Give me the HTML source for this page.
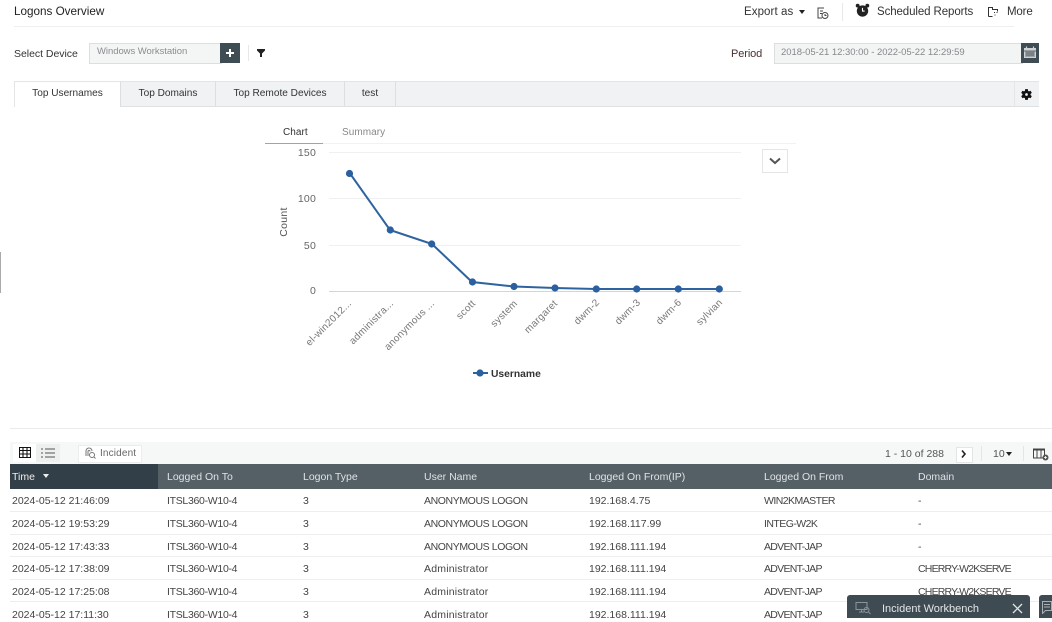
<!DOCTYPE html>
<html><head><meta charset="utf-8">
<style>
html,body{margin:0;padding:0;background:#fff;}
body{width:1052px;height:618px;overflow:hidden;position:relative;font-family:"Liberation Sans",sans-serif;color:#333;}
.a{position:absolute;white-space:nowrap;}
.t{font-size:10.5px;line-height:14px;color:#444;}
.u{letter-spacing:-.4px;}
.i{letter-spacing:-.3px;}
.c{letter-spacing:-.7px;}
.m{letter-spacing:.2px;}
.h{font-size:10.5px;line-height:14px;color:#dfe3e5;letter-spacing:0;}
.l{position:absolute;left:10px;width:1042px;height:1px;background:#eceeef;}
.tab{position:absolute;top:81px;height:25px;line-height:25px;font-size:10.1px;text-align:center;color:#333;border-right:1px solid #dcdedf;box-sizing:border-box;}
</style></head><body>

<div class="a" style="left:14px;top:4px;font-size:11.7px;line-height:16px;color:#222;">Logons Overview</div>
<div class="a" style="left:14px;top:26px;width:1000px;height:1px;background:#eef0f0;"></div>

<div class="a" style="left:744px;top:5px;font-size:11.5px;line-height:15px;letter-spacing:.08px;color:#333;">Export as</div>
<div class="a" style="left:799px;top:10px;width:0;height:0;border:3.5px solid transparent;border-top:4px solid #222;border-bottom:0;"></div>
<svg class="a" style="left:816px;top:6px" width="14" height="14" viewBox="0 0 14 14" fill="none" stroke="#444" stroke-width="1"><path d="M8 2H2v10h4"/><path d="M4 5h3M4 7.500h2"/><circle cx="9" cy="9.500" r="3"/><path d="M9 8v1.500h1.500"/></svg>
<div class="a" style="left:842px;top:3px;width:1px;height:18px;background:#e6e8e8;"></div>
<svg class="a" style="left:855px;top:3px" width="15" height="15" viewBox="0 0 14 14"><circle cx="7" cy="7.500" r="5.300" fill="#222"/><circle cx="2.500" cy="2.500" r="1.800" fill="#222"/><circle cx="11.500" cy="2.500" r="1.800" fill="#222"/><path d="M7 4.500v3h2" stroke="#fff" stroke-width="1" fill="none"/></svg>
<div class="a" style="left:877px;top:5px;font-size:11.5px;line-height:15px;letter-spacing:-.1px;color:#333;">Scheduled Reports</div>
<svg class="a" style="left:987px;top:6px" width="12" height="12" viewBox="0 0 12 12" fill="none" stroke="#333" stroke-width="1"><path d="M1.500 10.500v-9h4v2h5v2"/><path d="M1.500 10.500h4M7 6.500h1M9.500 6.500h1M7.500 9h1"/></svg>
<div class="a" style="left:1007px;top:5px;font-size:11.5px;line-height:15px;letter-spacing:-.15px;color:#333;">More</div>

<div class="a" style="left:14px;top:47px;font-size:10.5px;line-height:14px;color:#333;letter-spacing:-.03px;">Select Device</div>
<div class="a" style="left:89px;top:43px;width:131px;height:19px;background:#f4f5f5;border:1px solid #dcdfe0;box-sizing:content-box;"></div>
<div class="a" style="left:97px;top:45px;font-size:9.5px;line-height:13px;color:#8a8d90;letter-spacing:-.05px;">Windows Workstation</div>
<div class="a" style="left:220px;top:43px;width:20px;height:20px;background:#404c53;"></div>
<div class="a" style="left:226px;top:52px;width:8px;height:2px;background:#fff;"></div>
<div class="a" style="left:229px;top:49px;width:2px;height:8px;background:#fff;"></div>
<div class="a" style="left:248px;top:45px;width:1px;height:16px;background:#e6e8e8;"></div>
<svg class="a" style="left:257px;top:49px" width="8" height="8" viewBox="0 0 8 8"><path d="M0 0h8v1.500L5 4.500V8H3V4.500L0 1.500z" fill="#222"/></svg>

<div class="a" style="left:731px;top:47px;font-size:11px;line-height:14px;color:#4b3030;letter-spacing:-.1px;">Period</div>
<div class="a" style="left:774px;top:43px;width:247px;height:19px;background:#f3f4f4;border:1px solid #dcdfe0;"></div>
<div class="a" style="left:781px;top:46px;font-size:9.5px;line-height:13px;color:#85888b;letter-spacing:-.03px;">2018-05-21 12:30:00 - 2022-05-22 12:29:59</div>
<div class="a" style="left:1021px;top:43px;width:18px;height:20px;background:#404c53;"></div>
<svg class="a" style="left:1023px;top:45px" width="14" height="14" viewBox="0 0 14 14"><path d="M1 3h12v10H1z" fill="#cfd3d5"/><path d="M1 6h12M3 8h8M3 10h8M3 6v6M5 6v6M7 6v6M9 6v6M11 6v6" stroke="#404c53" stroke-width=".7"/><path d="M3.500 1.500v2M10.500 1.500v2" stroke="#cfd3d5" stroke-width="1.200"/></svg>

<div class="a" style="left:14px;top:81px;width:1025px;height:26px;background:#f1f2f3;border-top:1px solid #e3e5e6;border-bottom:1px solid #dfe1e2;box-sizing:border-box;"></div>
<div class="tab" style="left:14px;width:107px;background:#fff;border-left:1px solid #e3e5e6;height:26px;border-top:1px solid #e3e5e6;line-height:24px;">Top Usernames</div>
<div class="tab" style="left:121px;width:95px;line-height:26px;">Top Domains</div>
<div class="tab" style="left:216px;width:129px;line-height:26px;">Top Remote Devices</div>
<div class="tab" style="left:345px;width:51px;line-height:26px;">test</div>
<div class="a" style="left:1014px;top:82px;width:1px;height:24px;background:#e4e6e7;"></div>
<svg class="a" style="left:1020px;top:88px" width="13" height="13" viewBox="0 0 24 24"><path d="M19.400 13a7.500 7.500 0 0 0 0-2l2.400-1.900-2.300-4-2.900 1.200a7.500 7.500 0 0 0-1.700-1L14.500 2h-5l-.4 3.300a7.500 7.500 0 0 0-1.700 1L4.500 5.100l-2.300 4L4.600 11a7.500 7.500 0 0 0 0 2l-2.400 1.900 2.300 4 2.900-1.200a7.500 7.500 0 0 0 1.700 1l.4 3.300h5l.4-3.300a7.500 7.500 0 0 0 1.700-1l2.900 1.200 2.300-4zM12 14.500a2.500 2.500 0 1 1 0-5 2.500 2.500 0 0 1 0 5z" fill="#111"/></svg>

<div class="a" style="left:266px;top:143px;width:530px;height:1px;background:#f1f2f2;"></div>
<div class="a" style="left:265px;top:143px;width:58px;height:1px;background:#8fbc5e;"></div>
<div class="a" style="left:283px;top:126px;font-size:10px;line-height:14px;color:#333;letter-spacing:.05px;">Chart</div>
<div class="a" style="left:342px;top:126px;font-size:10px;line-height:14px;color:#888;letter-spacing:.05px;">Summary</div>

<svg class="a" style="left:0;top:0;overflow:visible" width="1052" height="618">
<g stroke="#eef0f1" stroke-width="1"><path d="M329 152.500h412M329 198.500h412M329 245.500h412"/></g>
<path d="M329 291.500h412" stroke="#ccd6eb" stroke-width="1"/>
<g font-family="Liberation Sans" font-size="10.500" fill="#666" text-anchor="end" letter-spacing=".2">
<text x="316" y="156">150</text><text x="316" y="202">100</text><text x="316" y="249">50</text><text x="316" y="294">0</text></g>
<text transform="translate(287 222) rotate(-90)" text-anchor="middle" font-family="Liberation Sans" font-size="10.500" fill="#555" letter-spacing=".3">Count</text>
<polyline points="350,173.500 390,230 432,244 472,282 514,286.500 555,288 596,289 636,289 678,289 719,289" fill="none" stroke="#2f63a0" stroke-width="2"/>
<g fill="#2b60a0"><circle cx="349.500" cy="173.500" r="3.600"/><circle cx="390.300" cy="230" r="3.600"/><circle cx="431.700" cy="244" r="3.600"/><circle cx="472.500" cy="282" r="3.600"/><circle cx="514" cy="286.500" r="3.600"/><circle cx="555" cy="288" r="3.600"/><circle cx="596.300" cy="289" r="3.600"/><circle cx="636.700" cy="289" r="3.600"/><circle cx="678.300" cy="289" r="3.600"/><circle cx="719.300" cy="289" r="3.600"/></g>
<g font-family="Liberation Sans" font-size="10" fill="#777" text-anchor="end" letter-spacing=".25">
<text transform="translate(352 304) rotate(-45)">el-win2012...</text>
<text transform="translate(394 304) rotate(-45)">administra...</text>
<text transform="translate(435 304) rotate(-45)">anonymous ...</text>
<text transform="translate(476 304) rotate(-45)">scott</text>
<text transform="translate(518 304) rotate(-45)">system</text>
<text transform="translate(558 304) rotate(-45)">margaret</text>
<text transform="translate(600 303) rotate(-45)">dwm-2</text>
<text transform="translate(641 303) rotate(-45)">dwm-3</text>
<text transform="translate(682 303) rotate(-45)">dwm-6</text>
<text transform="translate(723 303) rotate(-45)">sylvian</text>
</g>
<path d="M473 373h15" stroke="#2f63a0" stroke-width="2"/><circle cx="480" cy="373" r="3.600" fill="#2b60a0"/>
<text x="491" y="377" font-family="Liberation Sans" font-size="10.300" font-weight="bold" fill="#333">Username</text>
</svg>

<div class="a" style="left:762px;top:149px;width:24px;height:22px;border:1px solid #e3e5e6;background:#fff;"></div>
<svg class="a" style="left:769px;top:157px" width="12" height="8" viewBox="0 0 12 8"><path d="M1 1.500l5 4.500 5-4.500" fill="none" stroke="#555" stroke-width="2"/></svg>

<div class="a" style="left:10px;top:428px;width:1042px;height:1px;background:#e9ebec;"></div>
<div class="a" style="left:10px;top:442px;width:1042px;height:22px;background:#f6f7f7;"></div>
<div class="a" style="left:13px;top:444px;width:47px;height:18px;background:#eef0f0;"></div>
<div class="a" style="left:13px;top:444px;width:23px;height:18px;background:#fff;"></div>
<svg class="a" style="left:19px;top:447px" width="12" height="11" viewBox="0 0 12 11"><path d="M.5.500h11v10H.500zM.5 3.500h11M.5 7h11M4 .5v10M8 .5v10" fill="none" stroke="#111" stroke-width="1.100"/></svg>
<svg class="a" style="left:41px;top:448px" width="14" height="10" viewBox="0 0 14 10"><path d="M4 1h10M4 5h10M4 9h10M0 1h2M0 5h2M0 9h2" stroke="#555" stroke-width="1"/></svg>
<div class="a" style="left:78px;top:445px;width:62px;height:16px;background:#fff;border:1px solid #eceeee;"></div>
<svg class="a" style="left:84px;top:447px" width="12" height="12" viewBox="0 0 12 12" fill="none" stroke="#777" stroke-width="1"><path d="M2 9V4a3 3 0 0 1 6 0M4 9V4.500a1 1 0 0 1 2 0"/><circle cx="8" cy="8" r="2.500"/><path d="M10 10l1.500 1.500"/></svg>
<div class="a" style="left:100px;top:447px;font-size:10px;line-height:13px;color:#666;letter-spacing:.15px;">Incident</div>

<div class="a" style="left:885px;top:447px;font-size:10.5px;line-height:14px;color:#555;">1 - 10 of 288</div>
<div class="a" style="left:956px;top:447px;width:15px;height:14px;background:#fff;border:1px solid #e4e6e6;"></div>
<svg class="a" style="left:961px;top:450px" width="6" height="8" viewBox="0 0 6 8"><path d="M1 .5l3 3.500-3 3.500" fill="none" stroke="#222" stroke-width="1.600"/></svg>
<div class="a" style="left:981px;top:446px;width:1px;height:15px;background:#e4e6e6;"></div>
<div class="a" style="left:993px;top:447px;font-size:10.500px;line-height:14px;color:#555;">10</div>
<div class="a" style="left:1006px;top:452px;width:0;height:0;border:3.500px solid transparent;border-top:4px solid #222;border-bottom:0;"></div>
<div class="a" style="left:1023px;top:446px;width:1px;height:15px;background:#e4e6e6;"></div>
<svg class="a" style="left:1033px;top:448px" width="16" height="13" viewBox="0 0 16 13"><path d="M.5 1h11v9H.500z" fill="none" stroke="#444"/><path d="M.5 1.500h11" stroke="#444" stroke-width="2"/><path d="M4 2v8M8 2v8" stroke="#444"/><circle cx="12.500" cy="9.500" r="3" fill="#555"/><path d="M11 9.500h3M12.500 8v3" stroke="#fff" stroke-width=".8"/></svg>

<div class="a" style="left:10px;top:464px;width:1042px;height:25px;background:#545f66;"></div>
<div class="a" style="left:10px;top:464px;width:148px;height:25px;background:#333f48;"></div>
<div class="a h" style="left:12px;top:470px;color:#eee;">Time</div>
<div class="a" style="left:43px;top:474px;width:0;height:0;border:3.500px solid transparent;border-top:4px solid #eee;border-bottom:0;"></div>
<div class="a h" style="left:167px;top:470px;">Logged On To</div>
<div class="a h" style="left:303px;top:470px;">Logon Type</div>
<div class="a h" style="left:424px;top:470px;">User Name</div>
<div class="a h" style="left:589px;top:470px;">Logged On From(IP)</div>
<div class="a h" style="left:764px;top:470px;">Logged On From</div>
<div class="a h" style="left:918px;top:470px;">Domain</div>

<div class="l" style="top:511px"></div><div class="l" style="top:534px"></div><div class="l" style="top:556px"></div><div class="l" style="top:579px"></div><div class="l" style="top:601px"></div>

<div class="a t" style="left:12px;top:494px">2024-05-12 21:46:09</div><div class="a t i" style="left:167px;top:494px">ITSL360-W10-4</div><div class="a t" style="left:303px;top:494px">3</div><div class="a t u" style="left:424px;top:494px">ANONYMOUS LOGON</div><div class="a t" style="left:589px;top:494px">192.168.4.75</div><div class="a t c" style="left:764px;top:494px;letter-spacing:-.55px">WIN2KMASTER</div><div class="a t" style="left:918px;top:494px">-</div>
<div class="a t" style="left:12px;top:517px">2024-05-12 19:53:29</div><div class="a t i" style="left:167px;top:517px">ITSL360-W10-4</div><div class="a t" style="left:303px;top:517px">3</div><div class="a t u" style="left:424px;top:517px">ANONYMOUS LOGON</div><div class="a t" style="left:589px;top:517px">192.168.117.99</div><div class="a t c" style="left:764px;top:517px;letter-spacing:-.55px">INTEG-W2K</div><div class="a t" style="left:918px;top:517px">-</div>
<div class="a t" style="left:12px;top:540px">2024-05-12 17:43:33</div><div class="a t i" style="left:167px;top:540px">ITSL360-W10-4</div><div class="a t" style="left:303px;top:540px">3</div><div class="a t u" style="left:424px;top:540px">ANONYMOUS LOGON</div><div class="a t" style="left:589px;top:540px">192.168.111.194</div><div class="a t c" style="left:764px;top:540px">ADVENT-JAP</div><div class="a t" style="left:918px;top:540px">-</div>
<div class="a t" style="left:12px;top:562px">2024-05-12 17:38:09</div><div class="a t i" style="left:167px;top:562px">ITSL360-W10-4</div><div class="a t" style="left:303px;top:562px">3</div><div class="a t m" style="left:424px;top:562px">Administrator</div><div class="a t" style="left:589px;top:562px">192.168.111.194</div><div class="a t c" style="left:764px;top:562px">ADVENT-JAP</div><div class="a t c" style="left:918px;top:562px;letter-spacing:-.8px">CHERRY-W2KSERVE</div>
<div class="a t" style="left:12px;top:585px">2024-05-12 17:25:08</div><div class="a t i" style="left:167px;top:585px">ITSL360-W10-4</div><div class="a t" style="left:303px;top:585px">3</div><div class="a t m" style="left:424px;top:585px">Administrator</div><div class="a t" style="left:589px;top:585px">192.168.111.194</div><div class="a t c" style="left:764px;top:585px">ADVENT-JAP</div><div class="a t c" style="left:918px;top:585px;letter-spacing:-.8px">CHERRY-W2KSERVE</div>
<div class="a t" style="left:12px;top:608px">2024-05-12 17:11:30</div><div class="a t i" style="left:167px;top:608px">ITSL360-W10-4</div><div class="a t" style="left:303px;top:608px">3</div><div class="a t m" style="left:424px;top:608px">Administrator</div><div class="a t" style="left:589px;top:608px">192.168.111.194</div><div class="a t c" style="left:764px;top:608px">ADVENT-JAP</div>

<div class="a" style="left:847px;top:595px;width:183px;height:23px;background:#3f4b53;border-radius:3px 3px 0 0;"></div>
<svg class="a" style="left:855px;top:601px" width="16" height="14" viewBox="0 0 16 14" fill="none" stroke="#8b9499" stroke-width="1"><path d="M1 1.500h11v7H1zM4 11h5M6.500 8.500V11"/><circle cx="11.500" cy="9" r="2.500"/><path d="M13.500 11l2 2"/></svg>
<div class="a" style="left:882px;top:602px;font-size:11px;line-height:14px;color:#e3e6e8;">Incident Workbench</div>
<svg class="a" style="left:1012px;top:603px" width="11" height="11" viewBox="0 0 11 11"><path d="M1 1l9 9M10 1l-9 9" stroke="#e3e6e8" stroke-width="1.300"/></svg>
<div class="a" style="left:1039px;top:595px;width:13px;height:23px;background:#3f4b53;border-radius:3px 0 0 0;"></div>
<svg class="a" style="left:1042px;top:601px" width="10" height="13" viewBox="0 0 10 13" fill="none" stroke="#aab1b5"><path d="M.5.500h9v9h-6l-3 3zM2 3.500h6M2 6h6"/></svg>
<div class="a" style="left:0;top:252px;width:1px;height:41px;background:#aaa;"></div>
</body></html>
